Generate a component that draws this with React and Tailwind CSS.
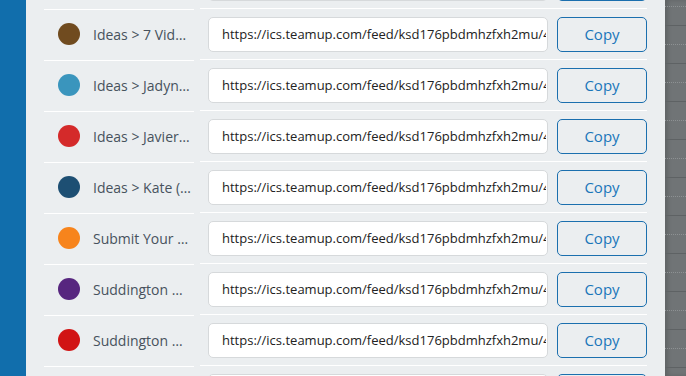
const feeds = [
  { id: 0, name: "Ideas > 6 Photos", color: "bg-[#2f8f4e]" },
  { id: 1, name: "Ideas > 7 Videos", color: "bg-[#704b1f]" },
  { id: 2, name: "Ideas > Jadyn Smith", color: "bg-[#3a95bd]" },
  { id: 3, name: "Ideas > Javier Lopez", color: "bg-[#d42a2a]" },
  { id: 4, name: "Ideas > Kate (Marketing)", color: "bg-[#1d4f73]" },
  { id: 5, name: "Submit Your Music", color: "bg-[#f7841c]" },
  { id: 6, name: "Suddington Weddings", color: "bg-[#57267f]" },
  { id: 7, name: "Suddington Workshops", color: "bg-[#d11414]" },
  { id: 8, name: "Team Calendar", color: "bg-[#2a6db0]" },
];

const url = "https://ics.teamup.com/feed/ksd176pbdmhzfxh2mu/4/calendar.ics";

const FeedRow = ({ feed }) => (
  <div className="flex h-[51px] gap-[6px]">
    <div className="flex w-[150px] shrink-0 items-center border-t border-white pb-[2px] pl-[14px]">
      <span className={`h-[22px] w-[22px] shrink-0 rounded-full ${feed.color}`} />
      <span className="ml-[13px] w-[100px] truncate text-[14px] text-[#47525d]">
        {feed.name}
      </span>
    </div>
    <div className="-mt-px flex flex-1 items-center gap-[9px] border-t border-white pb-px pl-[8px]">
      <input
        readOnly
        value={url}
        className="h-[35px] w-[340px] rounded-[5px] border border-[#d6d9db] bg-white pl-[13px] pr-[1px] text-[13px] text-[#222] outline-none"
      />
      <button className="h-[35px] w-[90px] rounded-[5px] border border-[#1b6fae] text-[15px] text-[#1a76ba]">
        Copy
      </button>
    </div>
  </div>
);

export default function App() {
  return (
    <div
      className="flex h-[376px] w-[686px] overflow-hidden bg-[#707476]"
      style={{ fontFamily: '"Open Sans", "Noto Sans", sans-serif' }}
    >
      <div className="w-[26px] shrink-0 bg-[#116eac]" />
      <div className="w-[639px] shrink-0 bg-[#ebeef0] px-[18px]">
        <div className="-mt-[42px]">
          {feeds.map((feed) => (
            <FeedRow key={feed.id} feed={feed} />
          ))}
        </div>
      </div>
      <div className="flex-1 shadow-[inset_3px_0_4px_rgba(0,0,0,0.15)]">
        <div className="-mt-[12px]">
          {Array.from({ length: 22 }).map((_, i) => (
            <div
              key={i}
              className={`h-[19px] border-b ${
                i % 2 === 0
                  ? "border-dotted border-[#8d9193]"
                  : "border-solid border-[#5e6264]"
              }`}
            />
          ))}
        </div>
      </div>
    </div>
  );
}
